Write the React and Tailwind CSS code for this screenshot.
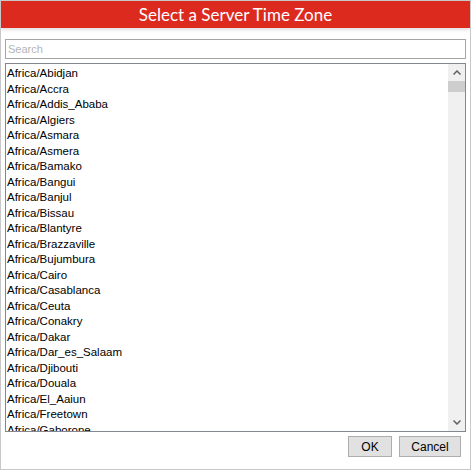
import React from "react";

const zones = [
  "Africa/Abidjan","Africa/Accra","Africa/Addis_Ababa","Africa/Algiers","Africa/Asmara","Africa/Asmera","Africa/Bamako","Africa/Bangui","Africa/Banjul","Africa/Bissau","Africa/Blantyre","Africa/Brazzaville","Africa/Bujumbura","Africa/Cairo","Africa/Casablanca","Africa/Ceuta","Africa/Conakry","Africa/Dakar","Africa/Dar_es_Salaam","Africa/Djibouti","Africa/Douala","Africa/El_Aaiun","Africa/Freetown","Africa/Gaborone",
];

export default function App() {
  return (
    <div className="w-[471px] h-[470px] bg-white border border-[#c8c8c8] flex flex-col overflow-hidden" style={{ fontFamily: '"Liberation Sans", Arial, sans-serif' }}>
      <div className="h-[27px] shrink-0 bg-[#dc2a1f] flex items-center justify-center text-white text-[17px] shadow-[0_2px_3px_rgba(0,0,0,0.12)]" style={{ fontFamily: 'Lato, "Open Sans", sans-serif' }}>
        Select a Server Time Zone
      </div>
      <div className="flex-1 flex flex-col px-[4px] pt-[11px]">
        <div className="h-[20px] border border-[#a6a6a6] bg-white flex items-center px-[2px] text-[11px] text-[#b4b4b4]">
          Search
        </div>
        <div className="mt-[4px] h-[369px] border border-[#828790] bg-white flex overflow-hidden">
          <div className="flex-1 pl-[1px] pt-[2px] text-[11.5px] text-black leading-[15.5px] overflow-hidden">
            {zones.map((z) => (
              <div key={z} className="h-[15.5px] whitespace-nowrap">{z}</div>
            ))}
          </div>
          <div className="w-[17px] bg-[#f0f0f0] flex flex-col items-center">
            <div className="h-[17px] w-full flex items-center justify-center">
              <svg width="8" height="5" viewBox="0 0 8 5"><path d="M0.5 4.5 L4 1 L7.5 4.5" fill="none" stroke="#606060" strokeWidth="1.5" /></svg>
            </div>
            <div className="w-full h-[11px] bg-[#cdcdcd]" />
            <div className="flex-1" />
            <div className="h-[17px] w-full flex items-center justify-center">
              <svg width="8" height="5" viewBox="0 0 8 5"><path d="M0.5 0.5 L4 4 L7.5 0.5" fill="none" stroke="#606060" strokeWidth="1.5" /></svg>
            </div>
          </div>
        </div>
        <div className="flex justify-end gap-[7px] mt-[4px] pr-[5px]">
          <button className="w-[44px] h-[21px] bg-[#e1e1e1] border border-[#adadad] text-[12px] text-black flex items-center justify-center">OK</button>
          <button className="w-[62px] h-[21px] bg-[#e1e1e1] border border-[#adadad] text-[12px] text-black flex items-center justify-center">Cancel</button>
        </div>
      </div>
    </div>
  );
}
